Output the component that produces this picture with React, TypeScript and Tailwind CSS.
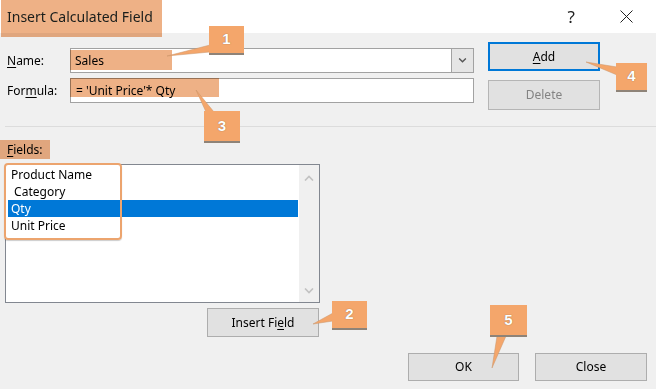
import React from "react";

function Callout({ n, className }: { n: number; className: string }) {
  return (
    <div
      className={`absolute flex items-center justify-center border-b-2 border-[#8e8378] bg-[#f4a66b] font-['Liberation_Sans',sans-serif] text-[15px] font-bold text-white [text-shadow:0_0_1px_#7a5a3a] ${className}`}
    >
      {n}
    </div>
  );
}

function Chevron({ up, className }: { up?: boolean; className: string }) {
  return (
    <svg viewBox="0 0 10 6" className={className} fill="none">
      <polyline
        points={up ? "1,5.5 5,1.5 9,5.5" : "1,0.5 5,4.5 9,0.5"}
        stroke="currentColor"
        strokeWidth="1.6"
      />
    </svg>
  );
}

const fields = ["Product Name", " Category", "Qty", "Unit Price"];

export default function App() {
  return (
    <div className="relative h-[389px] w-[656px] overflow-hidden bg-[#f0f0f0] font-['Noto_Sans',sans-serif] text-[12px] text-black">
      {/* Title bar */}
      <div className="flex h-[33px] items-center bg-white">
        <span className="ml-[7px] text-[14px] text-[#1b2a33]">Insert Calculated Field</span>
        <span className="ml-auto text-[17px] leading-none text-[#222]">?</span>
        <svg viewBox="0 0 13 13" className="ml-[45px] mr-[23px] h-[13px] w-[13px]">
          <path d="M0.5 0.5 L12.5 12.5 M12.5 0.5 L0.5 12.5" stroke="#222" strokeWidth="1" />
        </svg>
      </div>

      {/* Name / Formula + buttons */}
      <div className="flex items-start">
        <div className="mt-[15px] flex w-[474px] flex-col gap-[5px]">
          <div className="flex items-center">
            <label className="w-[70px] pl-[7px]">
              <span className="underline underline-offset-2">N</span>ame:
            </label>
            <div className="flex h-[25px] w-[404px] border border-[#a2a2a2] bg-white">
              <span className="flex-1 pl-[4px] leading-[23px]">Sales</span>
              <div className="flex w-[22px] items-center justify-center border-l border-[#a2a2a2] bg-[#e5e5e5] text-[#555]">
                <Chevron className="h-[5px] w-[9px]" />
              </div>
            </div>
          </div>
          <div className="flex items-center">
            <label className="w-[70px] pl-[7px]">
              For<span className="underline underline-offset-2">m</span>ula:
            </label>
            <div className="h-[25px] w-[404px] border border-[#a2a2a2] bg-white pl-[5px] leading-[23px]">
              = 'Unit Price'* Qty
            </div>
          </div>
        </div>
        <div className="ml-[14px] mt-[9px] flex flex-col gap-[9px]">
          <button className="h-[29px] w-[112px] border-2 border-[#0078d7] bg-[#e1e1e1]">
            <span className="underline underline-offset-2">A</span>dd
          </button>
          <button className="h-[30px] w-[112px] border border-[#b5b5b5] bg-[#e1e1e1] text-[#838383]">
            Delete
          </button>
        </div>
      </div>

      <div className="ml-[5px] mt-[16px] h-px bg-[#dcdcdc]" />

      {/* Fields */}
      <div className="mt-[13px] h-[19px] pl-[7px] leading-[19px]">
        <span className="underline underline-offset-2">F</span>ields:
      </div>
      <div className="ml-[5px] mt-[5px] flex h-[139px] w-[315px] border border-[#828790] bg-white">
        <div className="flex-1 pl-[2px] pr-px pt-px">
          {fields.map((f) => (
            <div
              key={f}
              className={`h-[17px] whitespace-pre pl-[3px] leading-[17px] ${
                f === "Qty" ? "bg-[#0078d7] text-white" : ""
              }`}
            >
              {f}
            </div>
          ))}
        </div>
        <div className="flex w-[20px] flex-col items-center justify-between bg-[#f0f0f0] pb-[8px] pt-[10px] text-[#c2c2c2]">
          <Chevron up className="h-[6px] w-[10px]" />
          <Chevron className="h-[6px] w-[10px]" />
        </div>
      </div>

      <button className="ml-[207px] mt-[5px] h-[29px] w-[112px] border border-[#adadad] bg-[#e1e1e1]">
        Insert Fi<span className="underline underline-offset-2">e</span>ld
      </button>

      <div className="ml-[408px] mt-[16px] flex gap-[16px]">
        <button className="h-[28px] w-[111px] border border-[#adadad] bg-[#e1e1e1]">OK</button>
        <button className="h-[28px] w-[112px] border border-[#adadad] bg-[#e1e1e1]">Close</button>
      </div>

      {/* Highlights */}
      <div className="absolute left-[1px] top-0 h-[37px] w-[161px] bg-[#eeb186] mix-blend-multiply" />
      <div className="absolute left-[70px] top-[50px] h-[20px] w-[102px] bg-[#eeb186] mix-blend-multiply" />
      <div className="absolute left-[70px] top-[78px] h-[19px] w-[149px] bg-[#eeb186] mix-blend-multiply" />
      <div className="absolute left-0 top-[140px] h-[19px] w-[50px] bg-[#eeb186] mix-blend-multiply" />
      <div className="absolute left-[4px] top-[163px] h-[77px] w-[118px] rounded-[4px] border-2 border-[#eca46e] shadow-[0_1px_1px_rgba(0,0,0,0.2)]" />

      {/* Callout pointers */}
      <svg viewBox="0 0 656 389" className="pointer-events-none absolute inset-0 h-[389px] w-[656px]">
        <g fill="#f4a66b" stroke="#c9946a" strokeWidth="0.5">
          <polygon points="210,45 210,52 167,56" />
          <polygon points="206,112 214,112 196,90" />
          <polygon points="617,67 617,75 586,62" />
          <polygon points="333,313 333,321 313,324" />
          <polygon points="497,336 506,336 492,368" />
        </g>
      </svg>

      <Callout n={1} className="left-[209px] top-[26px] h-[29px] w-[35px]" />
      <Callout n={3} className="left-[204px] top-[111px] h-[32px] w-[36px]" />
      <Callout n={4} className="left-[616px] top-[63px] h-[29px] w-[31px]" />
      <Callout n={2} className="left-[332px] top-[301px] h-[29px] w-[35px]" />
      <Callout n={5} className="left-[490px] top-[305px] h-[32px] w-[37px]" />
    </div>
  );
}
